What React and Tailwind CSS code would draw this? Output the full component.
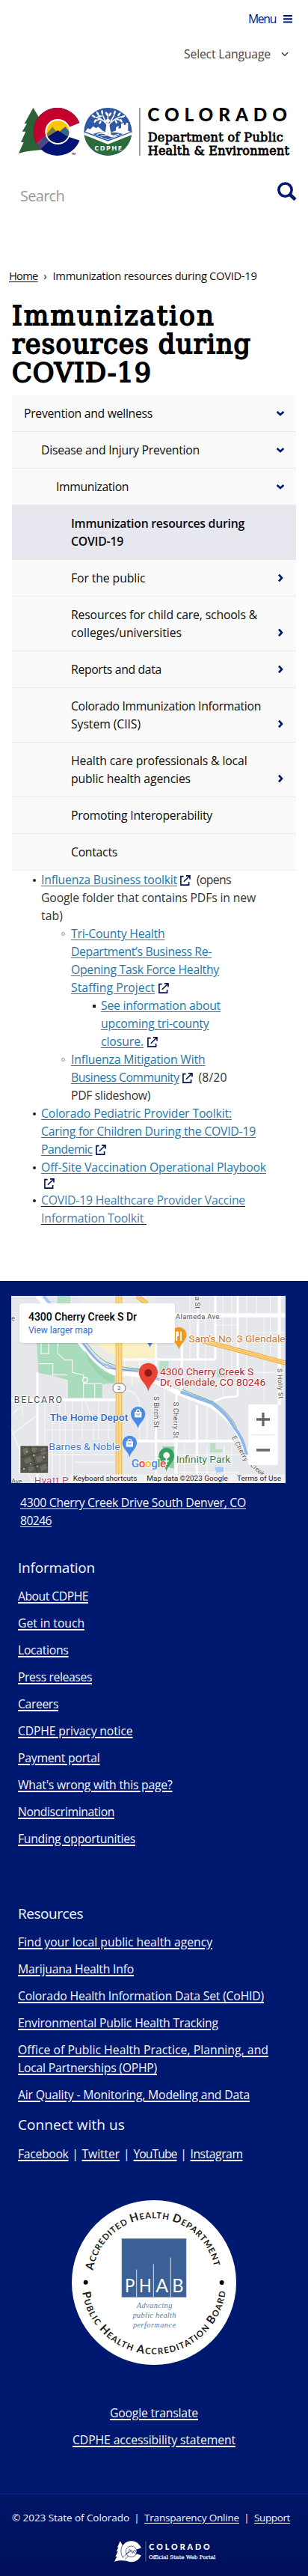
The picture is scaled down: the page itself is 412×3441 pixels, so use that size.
import { useLayoutEffect, useRef, useState } from 'react';

/* A single unbroken line whose letter spacing is adjusted to a given width. */
function Line({ w, className = '', children, as: Tag = 'span', ...rest }) {
  const ref = useRef(null);
  const [spacing, setSpacing] = useState(0);
  useLayoutEffect(() => {
    const natural = ref.current.getBoundingClientRect().width;
    setSpacing((w - natural) / ref.current.textContent.length);
  }, [w]);
  return (
    <Tag ref={ref} className={`inline-block whitespace-nowrap ${className}`} style={{ letterSpacing: `${spacing}px` }} {...rest}>
      {children}
    </Tag>
  );
}

function Hamburger() {
  return (
    <svg width="12" height="11" viewBox="0 0 12 11" fill="#001970">
      <rect y="0" width="12" height="2.2" rx="0.4" />
      <rect y="4.2" width="12" height="2.2" rx="0.4" />
      <rect y="8.4" width="12" height="2.2" rx="0.4" />
    </svg>
  );
}

function ExternalIcon({ className = '' }) {
  return (
    <svg className={`inline-block align-[-2px] ${className}`} width="14" height="14" viewBox="0 0 14 14" fill="none" stroke="#001150" strokeWidth="1.6">
      <path d="M4.6 1.6H0.9V13.1H11.6V9" />
      <path d="M4.8 8.8L12.6 1.2M8 0.9H13V5.6" />
    </svg>
  );
}

function Chevron({ down }) {
  return (
    <svg width="12" height="12" viewBox="0 0 12 12" fill="none" stroke="#001970" strokeWidth="2.7">
      <path d={down ? 'M1.6 4L6 8L10.4 4' : 'M4 1.6L8 6L4 10.4'} />
    </svg>
  );
}

function HeaderLogo() {
  return (
    <svg className="block h-16 w-[363px] overflow-visible" viewBox="75 432 1089 192">
      <path d="M133 432L160 476L153 476L176 520L168 545L190 600Q130 600 75 614L95 570L84 570L103 527L89 527L108 496L98 496Z" fill="#2a6136" />
      <circle cx="230" cy="528" r="96" fill="#001473" />
      <path d="M163 597A96 96 0 0 1 150 475A96 96 0 0 1 326 528L232 528Z" fill="#c5002e" />
      <path d="M146 574L196 530L212 552L163 597A96 96 0 0 1 146 574Z" fill="#6a4a78" />
      <path d="M163 597L200 556L180 545L152 582Z" fill="#4a4588" />
      <path d="M274 511L330 488V566L277 549Z" fill="#fff" />
      <circle cx="232" cy="528" r="51" fill="#fff" />
      <clipPath id="sun"><circle cx="232" cy="528" r="45" /></clipPath>
      <g clipPath="url(#sun)">
        <rect x="180" y="480" width="105" height="100" fill="#ffc800" />
        <path d="M180 545L211 508L240 545L262 508L290 540V580H180Z" fill="#7d7d3a" />
        <path d="M225 540L261 508L290 545V570H220Z" fill="#37648a" />
        <path d="M175 558L232 522L290 560V590H175Z" fill="#001473" />
      </g>
      <text x="287" y="620" fontSize="10" fontWeight="700" fontFamily="Lato">TM</text>

      <circle cx="433" cy="528" r="96" fill="#2d58a6" />
      <path d="M338 540L433 576L528 540A96 96 0 0 1 338 540Z" fill="#2c6c3c" />
      <path d="M338 530L433 566L528 530V541L433 578L338 541Z" fill="#fff" />
      <path d="M342 527L352 514L362 518L374 506L386 514L394 508L412 524L426 530L412 544L433 556L454 544L442 530L464 524L466 510L476 504V516L486 512V496L497 492V500L506 500V492L514 492V524L524 528L433 561Z" fill="#fff" />
      <path d="M372 537L398 530L424 534L444 530L470 532L494 537L433 559Z" fill="#2d58a6" />
      <path d="M388 539Q410 530 430 539T478 537M404 546Q422 537 440 545T466 543" stroke="#fff" strokeWidth="4" fill="none" />
      <g stroke="#fff" strokeWidth="5" strokeLinecap="round" fill="none">
        <path d="M433 538V496M425 540L431 500M442 540L435 500" strokeWidth="8" />
        <path d="M433 506Q424 482 386 470M433 506Q446 482 484 468M424 487L412 462M444 486L458 462M433 476L433 456M404 476L384 484M466 476L486 484" />
      </g>
      <circle cx="433" cy="484" r="8" fill="#fff" />
      <g fill="#fff">
        <ellipse cx="376" cy="466" rx="9" ry="4" transform="rotate(30 376 466)" />
        <ellipse cx="392" cy="455" rx="9" ry="4" transform="rotate(60 392 455)" />
        <ellipse cx="410" cy="450" rx="9" ry="4" transform="rotate(80 410 450)" />
        <ellipse cx="400" cy="466" rx="9" ry="4" />
        <ellipse cx="428" cy="456" rx="9" ry="4" transform="rotate(60 428 456)" />
        <ellipse cx="442" cy="458" rx="9" ry="4" transform="rotate(120 442 458)" />
        <ellipse cx="460" cy="452" rx="9" ry="4" transform="rotate(110 460 452)" />
        <ellipse cx="478" cy="458" rx="9" ry="4" transform="rotate(130 478 458)" />
        <ellipse cx="493" cy="467" rx="9" ry="4" transform="rotate(-20 493 467)" />
        <ellipse cx="382" cy="485" rx="8" ry="4" transform="rotate(-60 382 485)" />
        <ellipse cx="402" cy="490" rx="8" ry="4" transform="rotate(-60 402 490)" />
        <ellipse cx="466" cy="488" rx="8" ry="4" transform="rotate(60 466 488)" />
        <ellipse cx="486" cy="484" rx="8" ry="4" transform="rotate(60 486 484)" />
      </g>
      <text x="379" y="603" fontSize="28" fontWeight="700" fontFamily="Open Sans" fill="#fff" textLength="110">CDPHE</text>

      <rect x="559" y="432" width="3.5" height="192" fill="#666" />
      <text x="592" y="487" fontSize="73" fontWeight="900" fontFamily="Lato" textLength="560">COLORADO</text>
      <g fontSize="48" fontFamily="DejaVu Serif" stroke="#000" strokeWidth="2.4">
        <text x="593" y="567" textLength="543">Department of Public</text>
        <text x="593" y="622" textLength="568">Health &amp; Environment</text>
      </g>
    </svg>
  );
}

const menu = [
  { lines: [['Prevention and wellness', 172]], indent: 'pl-4', icon: 'down' },
  { lines: [['Disease and Injury Prevention', 212]], indent: 'pl-[39px]', icon: 'down' },
  { lines: [['Immunization', 97]], indent: 'pl-[59px]', icon: 'down' },
  { lines: [['Immunization resources during', 232], ['COVID-19', 70]], indent: 'pl-[79px]', active: true },
  { lines: [['For the public', 99.5]], indent: 'pl-[79px]', icon: 'right' },
  { lines: [['Resources for child care, schools &', 249], ['colleges/universities', 148]], indent: 'pl-[79px]', icon: 'right' },
  { lines: [['Reports and data', 121]], indent: 'pl-[79px]', icon: 'right' },
  { lines: [['Colorado Immunization Information', 254], ['System (CIIS)', 93]], indent: 'pl-[79px]', icon: 'right' },
  { lines: [['Health care professionals & local', 235.5], ['public health agencies', 160]], indent: 'pl-[79px]', icon: 'right' },
  { lines: [['Promoting Interoperability', 189]], indent: 'pl-[79px]' },
  { lines: [['Contacts', 62]], indent: 'pl-[79px]' },
];

function SideMenu() {
  return (
    <ul className="ml-4 mr-4 mt-[11px] text-[#0b0b0b]">
      {menu.map((m) => (
        <li
          key={m.lines[0][0]}
          className={`flex items-end border-b py-3 pr-[15px] ${m.indent} ${m.active ? 'border-[#e6e7ef] bg-[#e6e7ef] font-semibold' : 'border-[#ececec] bg-[#fafafa]'}`}
        >
          <div className="flex-1">
            {m.lines.map(([t, w]) => (
              <div key={t} className="h-6"><Line w={w}>{t}</Line></div>
            ))}
          </div>
          {m.icon && <div className="flex h-6 items-center"><Chevron down={m.icon === 'down'} /></div>}
        </li>
      ))}
    </ul>
  );
}

const linkCls = 'text-[#2477ae] underline underline-offset-2';

function Item({ marker, children }) {
  return (
    <li className="flex">
      <span className="flex h-6 w-[13px] shrink-0 items-center pt-px">
        {marker === 'disc' && <i className="ml-0.5 size-1 rounded-full bg-[#222]" />}
        {marker === 'circle' && <i className="size-[5px] rounded-full border border-[#999]" />}
        {marker === 'square' && <i className="ml-0.5 size-1 bg-[#222]" />}
      </span>
      <div>{children}</div>
    </li>
  );
}

function Row({ children, className = 'h-6' }) {
  return <div className={`whitespace-nowrap ${className}`}>{children}</div>;
}

function Resources() {
  return (
    <ul className="pl-[42px] text-[#333]">
      <Item marker="disc">
        <Row><Line as="a" w={182} className={linkCls}>Influenza Business toolkit</Line><ExternalIcon className="ml-1 mr-2" /><Line w={46}>(opens</Line></Row>
        <Row><Line w={287}>Google folder that contains PDFs in new</Line></Row>
        <Row><Line w={29}>tab)</Line></Row>
        <ul className="pl-[27px]">
          <Item marker="circle">
            <Row><Line as="a" w={125.5} className={linkCls}>Tri-County Health</Line></Row>
            <Row><Line as="a" w={188} className={linkCls}>Department’s Business Re-</Line></Row>
            <Row><Line as="a" w={198} className={linkCls}>Opening Task Force Healthy</Line></Row>
            <Row><Line as="a" w={112} className={linkCls}>Staffing Project</Line><ExternalIcon className="ml-[5px]" /></Row>
            <ul className="pl-[27px]">
              <Item marker="square">
                <Row><Line as="a" w={160} className={linkCls}>See information about</Line></Row>
                <Row><Line as="a" w={144.5} className={linkCls}>upcoming tri-county</Line></Row>
                <Row><Line as="a" w={57} className={linkCls}>closure.</Line><ExternalIcon className="ml-[5px]" /></Row>
              </Item>
            </ul>
          </Item>
          <Item marker="circle">
            <Row><Line as="a" w={179.5} className={linkCls}>Influenza Mitigation With</Line></Row>
            <Row><Line as="a" w={144.5} className={linkCls}>Business Community</Line><ExternalIcon className="ml-1 mr-2" /><Line w={38}>(8/20</Line></Row>
            <Row><Line w={106}>PDF slideshow)</Line></Row>
          </Item>
        </ul>
      </Item>
      <Item marker="disc">
        <Row><Line as="a" w={255} className={linkCls}>Colorado Pediatric Provider Toolkit:</Line></Row>
        <Row><Line as="a" w={287} className={linkCls}>Caring for Children During the COVID-19</Line></Row>
        <Row><Line as="a" w={68.5} className={linkCls}>Pandemic</Line><ExternalIcon className="ml-1" /></Row>
      </Item>
      <Item marker="disc">
        <Row><Line as="a" w={301} className={linkCls}>Off-Site Vaccination Operational Playbook</Line></Row>
        <Row className="flex h-5 items-start pt-[3px]"><ExternalIcon className="ml-1" /></Row>
      </Item>
      <Item marker="disc">
        <Row><Line as="a" w={273} className="text-[#4580b3] underline decoration-[#001970] underline-offset-2">COVID-19 Healthcare Provider Vaccine</Line></Row>
        <Row><Line as="a" w={141} className="text-[#4580b3] underline decoration-[#001970] underline-offset-2">Information Toolkit&nbsp;</Line></Row>
      </Item>
    </ul>
  );
}

function Pin({ x, y, s = 1, fill }) {
  return (
    <g transform={`translate(${x} ${y}) scale(${s})`}>
      <path d="M0 0C-4 -22 -29 -34 -29 -58A29 29 0 0 1 29 -58C29 -34 4 -22 0 0Z" fill={fill} />
    </g>
  );
}

function Bag({ x, y }) {
  return (
    <g transform={`translate(${x} ${y})`}>
      <path d="M-14 -8H14V14H-14Z" fill="#fff" />
      <path d="M-7 -8A7 9 0 0 1 7 -8" fill="none" stroke="#fff" strokeWidth="4" />
      <path d="M-6 -2A6 6 0 0 0 6 -2" fill="none" stroke="#4b8be8" strokeWidth="3" />
    </g>
  );
}

function MapPicture() {
  return (
    <svg className="block h-[250px] w-[367px]" viewBox="45 123 1101 750" fontFamily="Roboto">
      <rect x="45" y="123" width="1101" height="750" fill="#e6e7ea" />
      <path d="M330 123H620V470H330Z" fill="#eceae6" />
      <path d="M380 310H625V372H470Z" fill="#fbefc4" />
      <path d="M230 123H282V160H230Z" fill="#b2dfc0" />
      <path d="M147 310H322L350 350L430 420L462 440V474L410 476V532H270V460L200 440L155 432Z" fill="#a9dcbc" />
      <path d="M640 384H676V430H640ZM870 415L905 412V450H870ZM843 712H865V738H893V750H843Z" fill="#b9e0c6" />
      <path d="M652 727H701V816L660 806Z" fill="#8dcda4" />
      <g stroke="#f6f7f8" strokeWidth="3.5" fill="none">
        <path d="M165 310V355H195V310M232 310V355L260 380H290V430L335 440V540M270 460V530M335 475H410M380 475V540M155 395H212V440H270" />
        <path d="M45 600L90 560M45 680L150 600M180 548V873M210 548V873M240 548V873M262 548V873M290 548V873M330 548V700M345 548L375 640V700M395 548V700M435 548V700M45 655L130 873M90 560V600M200 605H460M180 660H460M180 760H460M300 790H460" />
        <path d="M500 500Q560 510 560 560V700M590 600V700M660 500V720M530 440V480M500 370V430M560 370V410M762 123V385M825 210V470M895 123V520M930 123V470M990 123V500M1060 210V550M1030 123V210M865 240H960M730 385V460M870 470H950M1000 430H1140M1000 270H1140M1085 123V380M760 545V700M830 570V700M870 580V710M700 700V873M740 700V873M830 720V873M900 720V873M930 720V800M720 760H960M720 830H960" />
      </g>
      <g stroke="#fff" fill="none">
        <path d="M150 430V873" strokeWidth="9" />
        <path d="M45 540H470M490 705H940" strokeWidth="10" />
        <path d="M490 378H864M864 123V378M730 310V500M794 170V380M626 310V460M626 520V840M708 500V840M790 560V873" strokeWidth="9" />
        <path d="M700 201H1146" strokeWidth="17" />
        <path d="M1121 123V560" strokeWidth="12" />
        <path d="M954 123V520Q954 527 940 527L900 530L860 545" strokeWidth="8" />
        <path d="M150 123L210 190L320 310Q400 410 460 433Q560 432 620 465L700 505L850 565Q920 610 960 680L1010 800" strokeWidth="18" />
      </g>
      <path d="M175 123L335 315Q400 405 430 400Q465 420 500 420H560L640 460" stroke="#a8c7f5" strokeWidth="11" fill="none" />
      <path d="M725 508L850 553Q910 595 940 650Q975 690 990 760" stroke="#8fb6ee" strokeWidth="12" fill="none" />
      <path d="M345 310Q400 385 450 398Q500 412 570 418M730 498L855 548Q920 590 950 650" stroke="#5db27c" strokeWidth="3" fill="none" />
      <path d="M335 315Q400 400 430 412L555 426" stroke="#6f8fb8" strokeWidth="3" fill="none" />
      <path d="M340 340Q400 440 455 440V470Q400 460 350 375Z" fill="#9bd5b0" />
      <circle cx="342" cy="460" r="12" fill="#fff" /><circle cx="342" cy="460" r="8" fill="#a9dcbc" />
      <path d="M477 123V840" stroke="#f0b34f" strokeWidth="26" />
      <path d="M477 123V840" stroke="#fcd98a" strokeWidth="20" />
      <path d="M476 123V840" stroke="#f3bd5c" strokeWidth="3" />
      <path d="M550 123L590 155M800 300L960 342L1146 392" stroke="#efaa42" strokeWidth="19" fill="none" />
      <path d="M550 123L590 155M800 300L960 342L1146 392" stroke="#fcd27a" strokeWidth="13" fill="none" />
      <path d="M550 123L590 155M800 300L960 342L1146 392" stroke="#f3b652" strokeWidth="2.5" fill="none" />
      <rect x="453" y="474" width="50" height="37" rx="17" fill="#fff" stroke="#8a6c5c" strokeWidth="3" />
      <text x="478" y="502" fontSize="24" textAnchor="middle" fill="#444">2</text>
      <path d="M862 809H897V828L868 832Z" fill="#a9c4f5" />

      <g fill="#555" fontSize="28" stroke="#f3f3f3" strokeWidth="5" paintOrder="stroke">
        <text x="705" y="215" textLength="175">Alameda Ave</text>
        <text x="45" y="221">e</text>
        <text x="45" y="876" textLength="43">Ave</text>
        <text transform="translate(618 526) rotate(90)" textLength="125">S Birch St</text>
        <text transform="translate(696 548) rotate(90)" textLength="145">S Cherry St</text>
        <text transform="translate(783 125) rotate(90)" textLength="50">a St</text>
        <text transform="translate(1114 415) rotate(88)" fontSize="26" textLength="120">S Holly St</text>
        <text transform="translate(930 690) rotate(62)" fontSize="26" textLength="110">E Cherry</text>
        <text transform="translate(1003 803) rotate(42)" fontSize="26">Creek</text>
      </g>
      <g stroke="#fff" strokeWidth="5" paintOrder="stroke" strokeLinejoin="round">
        <text x="56" y="552" fontSize="37" fill="#4d4d55" textLength="193">BELCARO</text>
        <text x="757" y="309" fontSize="38" fill="#c97929" textLength="388" lengthAdjust="spacingAndGlyphs">Sam's No. 3 Glendale</text>
        <text x="200" y="624" fontSize="40" fill="#2f6cc8" fontWeight="500" textLength="314" lengthAdjust="spacingAndGlyphs">The Home Depot</text>
        <text x="196" y="741" fontSize="38" fill="#3f73cc" textLength="286" lengthAdjust="spacingAndGlyphs">Barnes &amp; Noble</text>
        <text x="707" y="793" fontSize="39" fill="#31834a" textLength="218" lengthAdjust="spacingAndGlyphs">Infinity Park</text>
        <text x="138" y="876" fontSize="39" fill="#d43a70" textLength="136">Hyatt P</text>
        <text x="642" y="441" fontSize="39" fill="#b6242b" textLength="376" lengthAdjust="spacingAndGlyphs">4300 Cherry Creek S</text>
        <text x="642" y="484" fontSize="39" fill="#b6242b" textLength="424" lengthAdjust="spacingAndGlyphs">Dr, Glendale, CO 80246</text>
      </g>
      <Pin x={718} y={339} s={1.04} fill="#f29a1f" />
      <path d="M708 266V285M714 266V285M708 285V303M726 266V303" stroke="#fff" strokeWidth="6" />
      <Pin x={602} y={330} s={0.6} fill="#3b86d8" />
      <Pin x={554} y={654} fill="#4b8be8" /><Bag x={554} y={596} />
      <Pin x={520} y={770} fill="#4b8be8" /><Bag x={520} y={714} />
      <Pin x={668} y={826} s={1.08} fill="#34a160" />
      <path d="M668 800V770M658 785H678" stroke="#fff" strokeWidth="5" /><circle cx="668" cy="762" r="13" fill="#fff" />
      <Pin x={595} y={505} s={1.3} fill="#ea4335" />
      <circle cx="595" cy="432" r="15" fill="#8e1b14" />

      <g fontSize="46" fontWeight="500" stroke="#fff" strokeWidth="5" paintOrder="stroke">
        <text y="810" textLength="140">
          <tspan x="527" fill="#4285f4">G</tspan><tspan fill="#ea4335">o</tspan><tspan fill="#fbbc04">o</tspan><tspan fill="#4285f4">g</tspan><tspan fill="#34a853">l</tspan><tspan fill="#ea4335">e</tspan>
        </text>
      </g>
      <rect x="78" y="720" width="119" height="117" rx="5" fill="#fff" />
      <rect x="82" y="724" width="111" height="109" fill="#55564c" />
      <g fill="#7d7b6c">
        <path d="M90 740L108 730L116 748L98 760ZM130 728L150 736L140 752L124 744ZM160 740L180 730L188 752L168 762ZM96 780L120 768L128 786L104 796ZM142 770L166 762L172 784L150 792ZM110 808L130 798L138 818L118 828ZM160 806L184 796L190 816L166 826Z" opacity="0.7" />
      </g>
      <path d="M84 770L190 742M120 724L150 833M84 815L192 790" stroke="#34362f" strokeWidth="3" opacity="0.6" />
      <g fill="#b5b1a2"><circle cx="136" cy="762" r="4" /><circle cx="108" cy="748" r="3" /><circle cx="176" cy="770" r="4" /><circle cx="122" cy="796" r="3" /><circle cx="96" cy="816" r="4" /><circle cx="150" cy="806" r="3" /></g>

      <rect x="280" y="838" width="866" height="35" fill="#f4f4f5" opacity="0.8" />
      <g fontSize="28" fill="#1c1c1c">
        <text x="293" y="863" textLength="257" lengthAdjust="spacingAndGlyphs">Keyboard shortcuts</text>
        <text x="589" y="863" textLength="325" lengthAdjust="spacingAndGlyphs">Map data ©2023 Google</text>
        <text x="951" y="863" textLength="177" lengthAdjust="spacingAndGlyphs">Terms of Use</text>
      </g>
      <rect x="997" y="558" width="118" height="243" rx="5" fill="#fff" />
      <path d="M1010 680H1103" stroke="#e6e6e6" strokeWidth="3" />
      <path d="M1029 618H1083M1056 591V645M1029 741H1083" stroke="#666" strokeWidth="10" />
    </svg>
  );
}

function MapPanel() {
  return (
    <div className="relative ml-[15px] w-[367px]">
      <MapPicture />
      <div className="absolute left-[11px] top-[10px] h-[53px] w-[208px] rounded-sm bg-white pl-3 pt-[9px] font-[Roboto] shadow">
        <div className="h-[18px] text-[14px] font-medium leading-[18px] text-black"><Line w={145}>4300 Cherry Creek S Dr</Line></div>
        <div className="h-[18px] text-[12px] leading-[18px] text-[#2b6fcb]"><Line w={86}>View larger map</Line></div>
      </div>
    </div>
  );
}

const footLink = 'underline decoration-[1.5px] underline-offset-2';

const information = [
  ['About CDPHE', 94], ['Get in touch', 89], ['Locations', 67.5], ['Press releases', 99], ['Careers', 54],
  ['CDPHE privacy notice', 153.5], ['Payment portal', 109.5], ["What's wrong with this page?", 206.5],
  ['Nondiscrimination', 129], ['Funding opportunities', 157],
];
const resources = [
  [['Find your local public health agency', 260]],
  [['Marijuana Health Info', 155]],
  [['Colorado Health Information Data Set (CoHID)', 329]],
  [['Environmental Public Health Tracking', 268]],
  [['Office of Public Health Practice, Planning, and', 335], ['Local Partnerships (OPHP)', 186]],
  [['Air Quality - Monitoring, Modeling and Data', 310]],
];

function Seal() {
  return (
    <svg className="mx-auto block size-[220px]" viewBox="48 118 660 660">
      <defs>
        <path id="sealTop" d="M133 400A248 248 0 0 1 623 400" />
        <path id="sealBottom" d="M91 487A290 290 0 0 0 665 487" />
      </defs>
      <circle cx="378" cy="448" r="330" fill="#fff" />
      <g fontFamily="Lato" fontWeight="700" fontSize="34" fill="#1b1b1b">
        <text textLength="684"><textPath href="#sealTop" textLength="684"><tspan fontSize="45">A</tspan>CCREDITED <tspan fontSize="45">H</tspan>EALTH <tspan fontSize="45">D</tspan>EPARTMENT</textPath></text>
        <text textLength="830"><textPath href="#sealBottom" textLength="830"><tspan fontSize="45">P</tspan>UBLIC <tspan fontSize="45">H</tspan>EALTH <tspan fontSize="45">A</tspan>CCREDITATION <tspan fontSize="45">B</tspan>OARD</textPath></text>
      </g>
      <circle cx="104" cy="447" r="9" /><circle cx="650" cy="448" r="9" />
      <rect x="249" y="272" width="258" height="234" fill="#3b6097" stroke="#6f7f9c" strokeWidth="2" />
      <path d="M308 396V506M376 374V506M445 348V506" stroke="#fff" strokeWidth="2.5" />
      <g fill="#fff" fontFamily="Lato" fontSize="75" textAnchor="middle">
        <text x="281" y="486" textLength="40" lengthAdjust="spacingAndGlyphs">P</text><text x="343" y="486" textLength="50" lengthAdjust="spacingAndGlyphs">H</text><text x="410" y="486">A</text><text x="474" y="486" textLength="46" lengthAdjust="spacingAndGlyphs">B</text>
      </g>
      <g fill="#5b7ba6" fontFamily="Liberation Serif" fontStyle="italic" fontSize="31">
        <text x="308" y="551" textLength="143">Advancing</text>
        <text x="293" y="588" textLength="173">public health</text>
        <text x="294" y="627" textLength="171">performance</text>
      </g>
    </svg>
  );
}

function PortalLogo() {
  return (
    <svg className="mx-auto block h-[29px] w-[136px]" viewBox="458 642 408 87">
      <path d="M481 643L493 664H489L498 684L497 700L506 722Q480 718 458 725L468 705H462L472 685H466L474 668H470Z" fill="#fff" />
      <circle cx="526" cy="685" r="42" fill="#fff" />
      <path d="M546 677L572 668V702L546 694Z" fill="#001563" />
      <g fill="none" stroke="#001563" strokeWidth="2">
        <circle cx="526" cy="685" r="22" fill="#fff" />
        <path d="M507 696L520 676L531 692L540 678L547 690M505 695L528 681L547 697M490 660Q478 685 492 710M492 708L508 694M500 716L514 703" />
      </g>
      <path d="M584 644V725" stroke="#566aa5" strokeWidth="3" />
      <text x="597" y="679" fontFamily="Lato" fontWeight="900" fontSize="32" fill="#fff" textLength="244">COLORADO</text>
      <text x="596" y="714" fontFamily="DejaVu Serif" fontSize="19" fill="#e8ecf8" stroke="#e8ecf8" strokeWidth="0.8" textLength="268" lengthAdjust="spacingAndGlyphs">Official State Web Portal</text>
    </svg>
  );
}

function FootHeading({ w, className, children }) {
  return <h2 className={`h-6 text-[19px] leading-6 ${className}`}><Line w={w}>{children}</Line></h2>;
}

export default function App() {
  return (
    <div className="w-[412px] overflow-hidden bg-white font-['Open_Sans',sans-serif] text-[15.75px] leading-6">
      <header className="h-[356px]">
        <div className="flex items-center justify-end gap-2.5 pr-[21px] pt-[13px] text-[#001970]">
          <Line w={37}>Menu</Line>
          <Hamburger />
        </div>
        <div className="mt-[23px] flex items-center justify-end gap-3.5 pr-[26px] text-[#444]">
          <Line w={116}>Select Language</Line>
          <svg width="10" height="7" viewBox="0 0 10 7" fill="none" stroke="#444" strokeWidth="1.6"><path d="M1 1.2L5 5.2L9 1.2" /></svg>
        </div>
        <div className="pl-[25px] pt-[60px]"><HeaderLogo /></div>
        <div className="mt-[35px] flex items-start justify-between pl-[27px] pr-[15px]">
          <div className="pt-[5px] text-[20px] leading-7 text-[#999]"><Line w={59}>Search</Line></div>
          <svg width="26" height="26" viewBox="0 0 26 26" fill="none" stroke="#001970"><circle cx="10.5" cy="10.6" r="8.6" strokeWidth="3.6" /><path d="M16.5 16.5L24 23.6" strokeWidth="4.6" /></svg>
        </div>
      </header>

      <nav className="flex h-6 pl-3 text-[14.75px] text-[#111]">
        <Line as="a" w={38.5} className="underline underline-offset-2">Home</Line>
        <span className="w-5 text-center">›</span>
        <Line w={273}>Immunization resources during COVID-19</Line>
      </nav>

      <h1 className="mt-[23px] h-[114px] pl-4 font-['DejaVu_Serif',serif] text-[35px] leading-[38px] text-black [-webkit-text-stroke:1.8px_#000]">
        <div className="h-[38px]"><Line w={272}>Immunization</Line></div>
        <div className="h-[38px]"><Line w={320}>resources during</Line></div>
        <div className="h-[38px]"><Line w={187}>COVID-19</Line></div>
      </h1>

      <SideMenu />
      <Resources />

      <footer className="mt-[72px] bg-[#001970] pt-5 text-[#f4f7ff]">
        <MapPanel />
        <div className="pl-[27px] pt-[14px]">
          <Row><Line as="a" w={302} className="underline underline-offset-2">4300 Cherry Creek Drive South Denver, CO</Line></Row>
          <Row><Line as="a" w={42} className="underline underline-offset-2">80246</Line></Row>
        </div>
        <div className="pl-6">
          <FootHeading w={103} className="mt-[39px]">Information</FootHeading>
          <ul className="mt-[14px] flex flex-col gap-3">
            {information.map(([t, w]) => <li key={t} className="h-6"><Line as="a" w={w} className={footLink}>{t}</Line></li>)}
          </ul>
          <FootHeading w={87} className="mt-[76px]">Resources</FootHeading>
          <ul className="mt-[14px] flex flex-col gap-3">
            {resources.map((lines) => (
              <li key={lines[0][0]}>
                {lines.map(([t, w]) => <Row key={t}><Line as="a" w={w} className={footLink}>{t}</Line></Row>)}
              </li>
            ))}
          </ul>
          <FootHeading w={143} className="mt-[16px]">Connect with us</FootHeading>
          <div className="mt-[15px] flex h-6">
            <Line as="a" w={67.5} className={footLink}>Facebook</Line><span className="w-[18px] text-center">|</span>
            <Line as="a" w={50.5} className={footLink}>Twitter</Line><span className="w-[18.5px] text-center">|</span>
            <Line as="a" w={58} className={footLink}>YouTube</Line><span className="w-[18px] text-center">|</span>
            <Line as="a" w={70} className={footLink}>Instagram</Line>
          </div>
        </div>
        <div className="pt-[50px]"><Seal /></div>
        <div className="flex flex-col items-center gap-3 pb-[60px] pt-[52px]">
          <Line as="a" w={118} className={footLink}>Google translate</Line>
          <Line as="a" w={218} className={footLink}>CDPHE accessibility statement</Line>
        </div>
        <div className="h-[110px] border-t border-[#0c2680] bg-linear-to-b from-[#001568] to-[#001059] pt-[19px]">
          <div className="flex h-6 pl-4 text-[13.5px]">
            <Line w={157}>© 2023 State of Colorado</Line><span className="w-5 text-center">|</span>
            <Line as="a" w={127} className="underline underline-offset-2">Transparency Online</Line><span className="w-5 text-center">|</span>
            <Line as="a" w={48} className="underline underline-offset-2">Support</Line>
          </div>
          <div className="pr-1 pt-[19px] ml-[33px]"><PortalLogo /></div>
        </div>
      </footer>
    </div>
  );
}
